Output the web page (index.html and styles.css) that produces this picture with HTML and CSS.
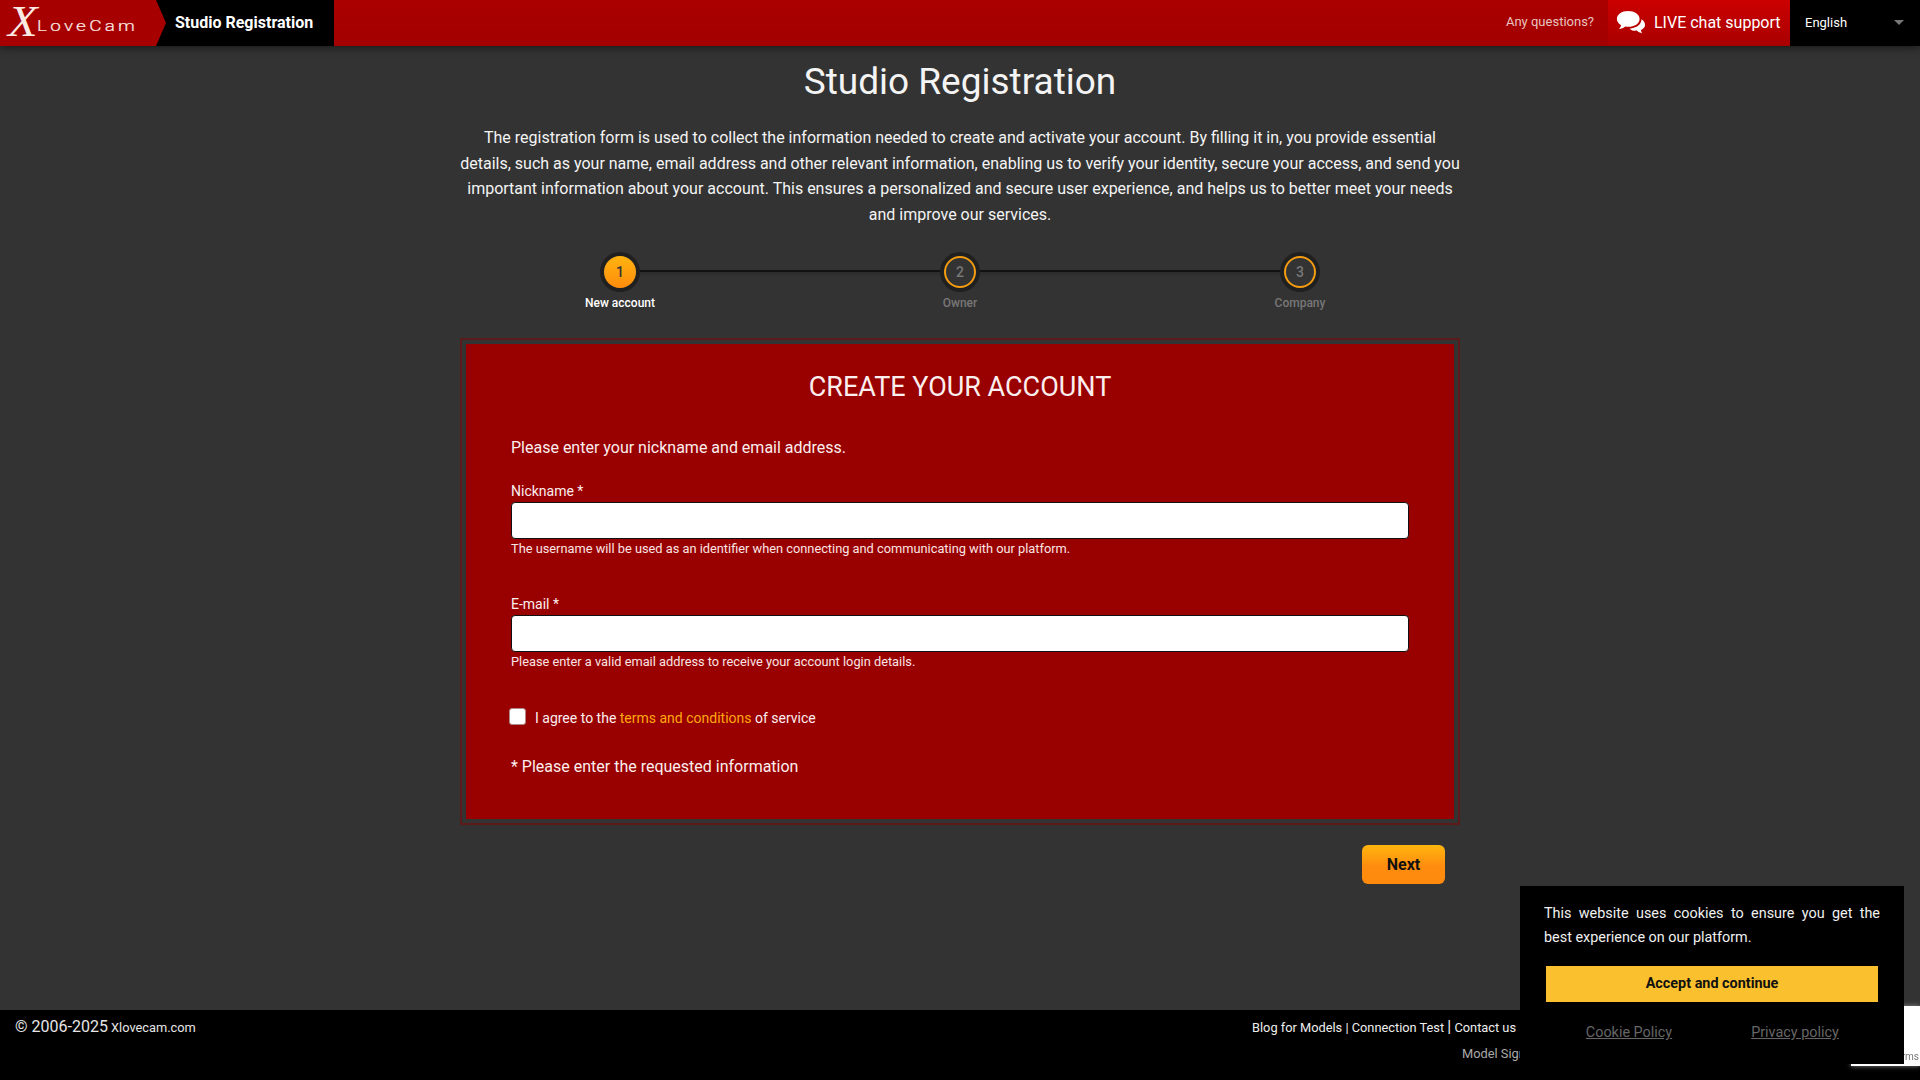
FILE: index.html
```html
<!DOCTYPE html>
<html lang="en">
<head>
<meta charset="UTF-8" />
<meta name="viewport" content="width=device-width, initial-scale=1" />
<title>Xlovecam - Studio Registration</title>
<link rel="stylesheet" href="styles.css">
</head>
<body>
<header class="topbar">
  <div class="brand">
    <a href="#" class="logo"><span class="logo-x">X</span><span class="logo-name">LoveCam</span></a>
    <span class="brand-title">Studio Registration</span>
  </div>
  <div class="topbar-right">
    <span class="questions">Any questions?</span>
    <a href="#" class="chat">
      <svg class="chat-icon" viewBox="0 0 32 26" width="31" height="25" aria-hidden="true">
        <path fill="#fff" d="M12.5 1C5.9 1 .8 4.700.8 9.300c0 2.700 1.700 5 4.400 6.500-.3 1.500-1.200 2.900-2.200 3.900 2.400-.2 4.700-1.100 6.500-2.500 1 .2 2 .3 3 .3 6.600 0 11.900-3.500 11.900-8.200S19.100 1 12.500 1z"/>
        <path fill="#fff" d="M26.300 9.700c.3 4.800-4.700 9.300-12.300 9.700 1.200 1.300 3.300 2.100 5.800 2.100.6 0 1.200 0 1.800-.1 1.200 1.300 3.200 2.300 5.700 3.100-.8-1.100-1.400-2.400-1.400-3.800 2.600-1 4.200-2.800 4.200-5 0-2.500-1.500-4.700-3.800-6z"/>
      </svg>
      <span>LIVE chat support</span>
    </a>
    <div class="lang"><span>English</span><i class="caret"></i></div>
  </div>
</header>

<main>
  <h1>Studio Registration</h1>
  <p class="intro">The registration form is used to collect the information needed to create and activate your account. By filling it in, you provide essential details, such as your name, email address and other relevant information, enabling us to verify your identity, secure your access, and send you important information about your account. This ensures a personalized and secure user experience, and helps us to better meet your needs and improve our services.</p>

  <ol class="steps">
    <li class="step active"><span class="step-num">1</span><span class="step-label">New account</span></li>
    <li class="step"><span class="step-num">2</span><span class="step-label">Owner</span></li>
    <li class="step"><span class="step-num">3</span><span class="step-label">Company</span></li>
  </ol>

  <form class="reg-form">
    <h2>Create your account</h2>
    <p class="form-lead">Please enter your nickname and email address.</p>

    <div class="field">
      <label for="nickname">Nickname *</label>
      <input type="text" id="nickname">
      <small>The username will be used as an identifier when connecting and communicating with our platform.</small>
    </div>

    <div class="field">
      <label for="email">E-mail *</label>
      <input type="text" id="email">
      <small>Please enter a valid email address to receive your account login details.</small>
    </div>

    <div class="agree">
      <input type="checkbox" id="agree">
      <label for="agree">I agree to the <a href="#">terms and conditions</a> of service</label>
    </div>

    <p class="required">* Please enter the requested information</p>
  </form>

  <div class="form-actions">
    <button type="button" class="next">Next</button>
  </div>
</main>

<footer>
  <div class="copy"><span class="years">© 2006-2025</span> Xlovecam.com</div>
  <div class="foot-links">
    <div class="foot-line"><a href="#">Blog for Models</a> | <a href="#">Connection Test</a> <span class="sep">|</span> <a href="#">Contact us</a></div>
    <div class="foot-line dim"><a href="#">Model Signup</a></div>
  </div>
</footer>

<div class="recaptcha">Terms</div>

<aside class="cookie">
  <p>This website uses cookies to ensure you get the best experience on our platform.</p>
  <button type="button" class="accept">Accept and continue</button>
  <div class="cookie-links">
    <a href="#">Cookie Policy</a>
    <a href="#">Privacy policy</a>
  </div>
</aside>
</body>
</html>
```

FILE: styles.css
```css
* {
  box-sizing: border-box;
}
body {
  margin: 0; font-family: Roboto, 'Liberation Sans', sans-serif; background: #333; color: #fff; min-height: 100vh; display: flex; flex-direction: column;
}
a {
  color: inherit; text-decoration: none;
}

/* top bar */
.topbar {
  height: 46px; display: flex; justify-content: space-between; background: linear-gradient(#aa0000, #a30000); box-shadow: 0 2px 8px rgb(0 0 0 / 0.5); position: relative;
}
.brand {
  display: flex; align-items: center; background: #000; width: 334px;
}
.logo {
  width: 166px; height: 46px; background: #a60000; clip-path: polygon(0 0, 156px 0, 166px 23px, 156px 100%, 0 100%); display: flex; align-items: center; padding-left: 8px; color: #fbe9e4;
}
.logo-x {
  font-family: 'Liberation Serif', serif; font-style: italic; font-size: 44px; line-height: 46px; width: 29px; transform: scaleX(1.1); transform-origin: left center; margin-top: -2px;
}
.logo-name {
  font-size: 14px; font-weight: 300; letter-spacing: 2.4px; margin-top: 5px; transform: scaleX(1.35); transform-origin: left center; -webkit-text-stroke: 0.2px #fbe9e4;
}
.brand-title {
  font-size: 16px; font-weight: 700; margin: -2px 0 0 9px;
}
.topbar-right {
  display: flex; align-items: stretch;
}
.questions {
  font-size: 13px; color: #e8c4c0; padding-right: 14px; align-self: center; margin-top: -4px;
}
.chat {
  width: 182px; display: flex; align-items: center; gap: 7px; padding: 0 0 2px 8px; font-size: 16px; background: linear-gradient(#cc0000, #a80000);
}
.chat-icon {
  display: block;
}
.lang {
  width: 130px; background: #000; font-size: 13px; display: flex; align-items: center; justify-content: space-between; padding: 0 16px 2px 15px;
}
.caret {
  width: 0; height: 0; border-left: 5px solid transparent; border-right: 5px solid transparent; border-top: 5px solid #777;
}

/* main column */
main {
  flex-grow: 1; width: 1000px; margin: 0 auto; display: flex; flex-direction: column;
}
h1 {
  font-weight: 400; font-size: 37px; line-height: 42px; margin: 15px 0 0; text-align: center; color: #f4f4f4;
}
.intro {
  font-size: 16px; line-height: 25.5px; margin: 22px 0 0; text-align: center; color: #f4f4f4;
}

/* steps */
.steps {
  list-style: none; margin: 29px -10px 0; padding: 0; display: flex;
}
.step {
  width: 340px; display: flex; flex-direction: column; align-items: center; position: relative; color: #777;
}
.step + .step::before {
  content: ''; position: absolute; top: 14px; left: -50%; width: 100%; height: 2px; background: #111; box-shadow: 0 2px 3px rgb(0 0 0 / 0.2);
}
.step-num {
  width: 32px; height: 32px; border-radius: 50%; border: 2px solid #f39c12; background: #333; box-shadow: 0 0 0 4px #202020; font-size: 14px; font-weight: 500; display: flex; align-items: center; justify-content: center; position: relative; z-index: 1;
}
.step.active .step-num {
  background: linear-gradient(#ffb30f, #ff8c0c); border: none; color: #333;
}
.step-label {
  font-size: 12px; font-weight: 500; margin-top: 8px; line-height: 14px;
}
.step.active .step-label {
  color: #fff;
}

/* form */
.reg-form {
  margin-top: 28px; height: 487px; border: 2px solid #5c1a1a; padding: 0 49px; position: relative;
}
.reg-form::before {
  content: ''; position: absolute; inset: 4px; background: #990000; z-index: -1;
}
h2 {
  font-weight: 400; font-size: 27px; line-height: 32px; margin: 31px 0 0; text-align: center; text-transform: uppercase; color: #fbeeee;
}
.form-lead {
  font-size: 16px; line-height: 20px; margin: 35px 0 0; color: #fbeeee;
}
.field {
  margin-top: 25px; margin-bottom: 40px; display: flex; flex-direction: column;
}
.field + .field {
  margin-top: 0;
}
.field label {
  font-size: 14px; line-height: 16px; margin-bottom: 3px; color: #fbeeee;
}
.field input {
  height: 37px; width: 100%; border: 1px solid #111; border-radius: 4px; background: #fff; padding: 0 8px;
}
.field small {
  font-size: 12.8px; line-height: 14px; margin-top: 3px; color: #fbe4e4;
}
.agree {
  display: flex; align-items: center; gap: 9px; font-size: 14px; margin-top: -1px; margin-left: -2px;
}
.agree input {
  appearance: none; width: 17px; height: 17px; margin: -2px 0 0; background: #fff; border: 1px solid #b08a8a; border-radius: 3px;
}
.agree label {
  margin-top: 2px; color: #fbeeee;
}
.agree a {
  color: #ffa80f;
}
.required {
  font-size: 16px; line-height: 20px; margin: 31px 0 0; color: #fbeeee;
}
.form-actions {
  display: flex; justify-content: flex-end; padding: 20px 15px 0 0;
}
.next {
  width: 83px; height: 39px; border: none; border-radius: 6px; background: linear-gradient(#ffb60f, #ff8c0e 55%, #ff8a0d); color: #111; font-family: inherit; font-size: 16px; font-weight: 700; cursor: pointer;
}

/* footer */
footer {
  height: 70px; background: #000; display: flex; justify-content: space-between; padding: 0 0 0 15px;
}
.copy {
  font-size: 12.8px; color: #e6e6e6; padding-top: 7px;
}
.years {
  font-size: 16px;
}
.foot-links {
  display: flex; flex-direction: column; align-items: flex-end; padding-right: 404px; font-size: 12.8px; padding-top: 9px; color: #eee;
}
.foot-line {
  line-height: 16px;
}
.foot-line.dim {
  color: #aaa; margin-top: 10px; margin-right: -24px;
}
.sep {
  font-size: 16px;
}

/* overlays */
.recaptcha {
  position: fixed; right: 0; bottom: 14px; width: 69px; height: 60px; background: #fff; box-shadow: 0 0 5px #888; color: #777; font-size: 10px; text-align: right; padding: 45px 1px 0 0; overflow: hidden;
}
.cookie {
  position: fixed; right: 16px; bottom: 16px; width: 384px; height: 178px; background: #000; padding: 16px 24px 0; display: flex; flex-direction: column;
}
.cookie p {
  margin: 0; font-size: 14.4px; line-height: 24px; text-align: justify; color: #f0f0f0;
}
.accept {
  width: 332px; height: 36px; margin: 16px 0 0 2px; border: none; background: #fbc02d; color: #111; font-family: inherit; font-size: 14.4px; font-weight: 700; padding-bottom: 3px; cursor: pointer;
}
.cookie-links {
  display: grid; grid-template-columns: 1fr 1fr; margin: 22px 0 0 2px; width: 332px; text-align: center; font-size: 14.4px; line-height: 18px; color: #666;
}
.cookie-links a {
  text-decoration: underline;
}
```
